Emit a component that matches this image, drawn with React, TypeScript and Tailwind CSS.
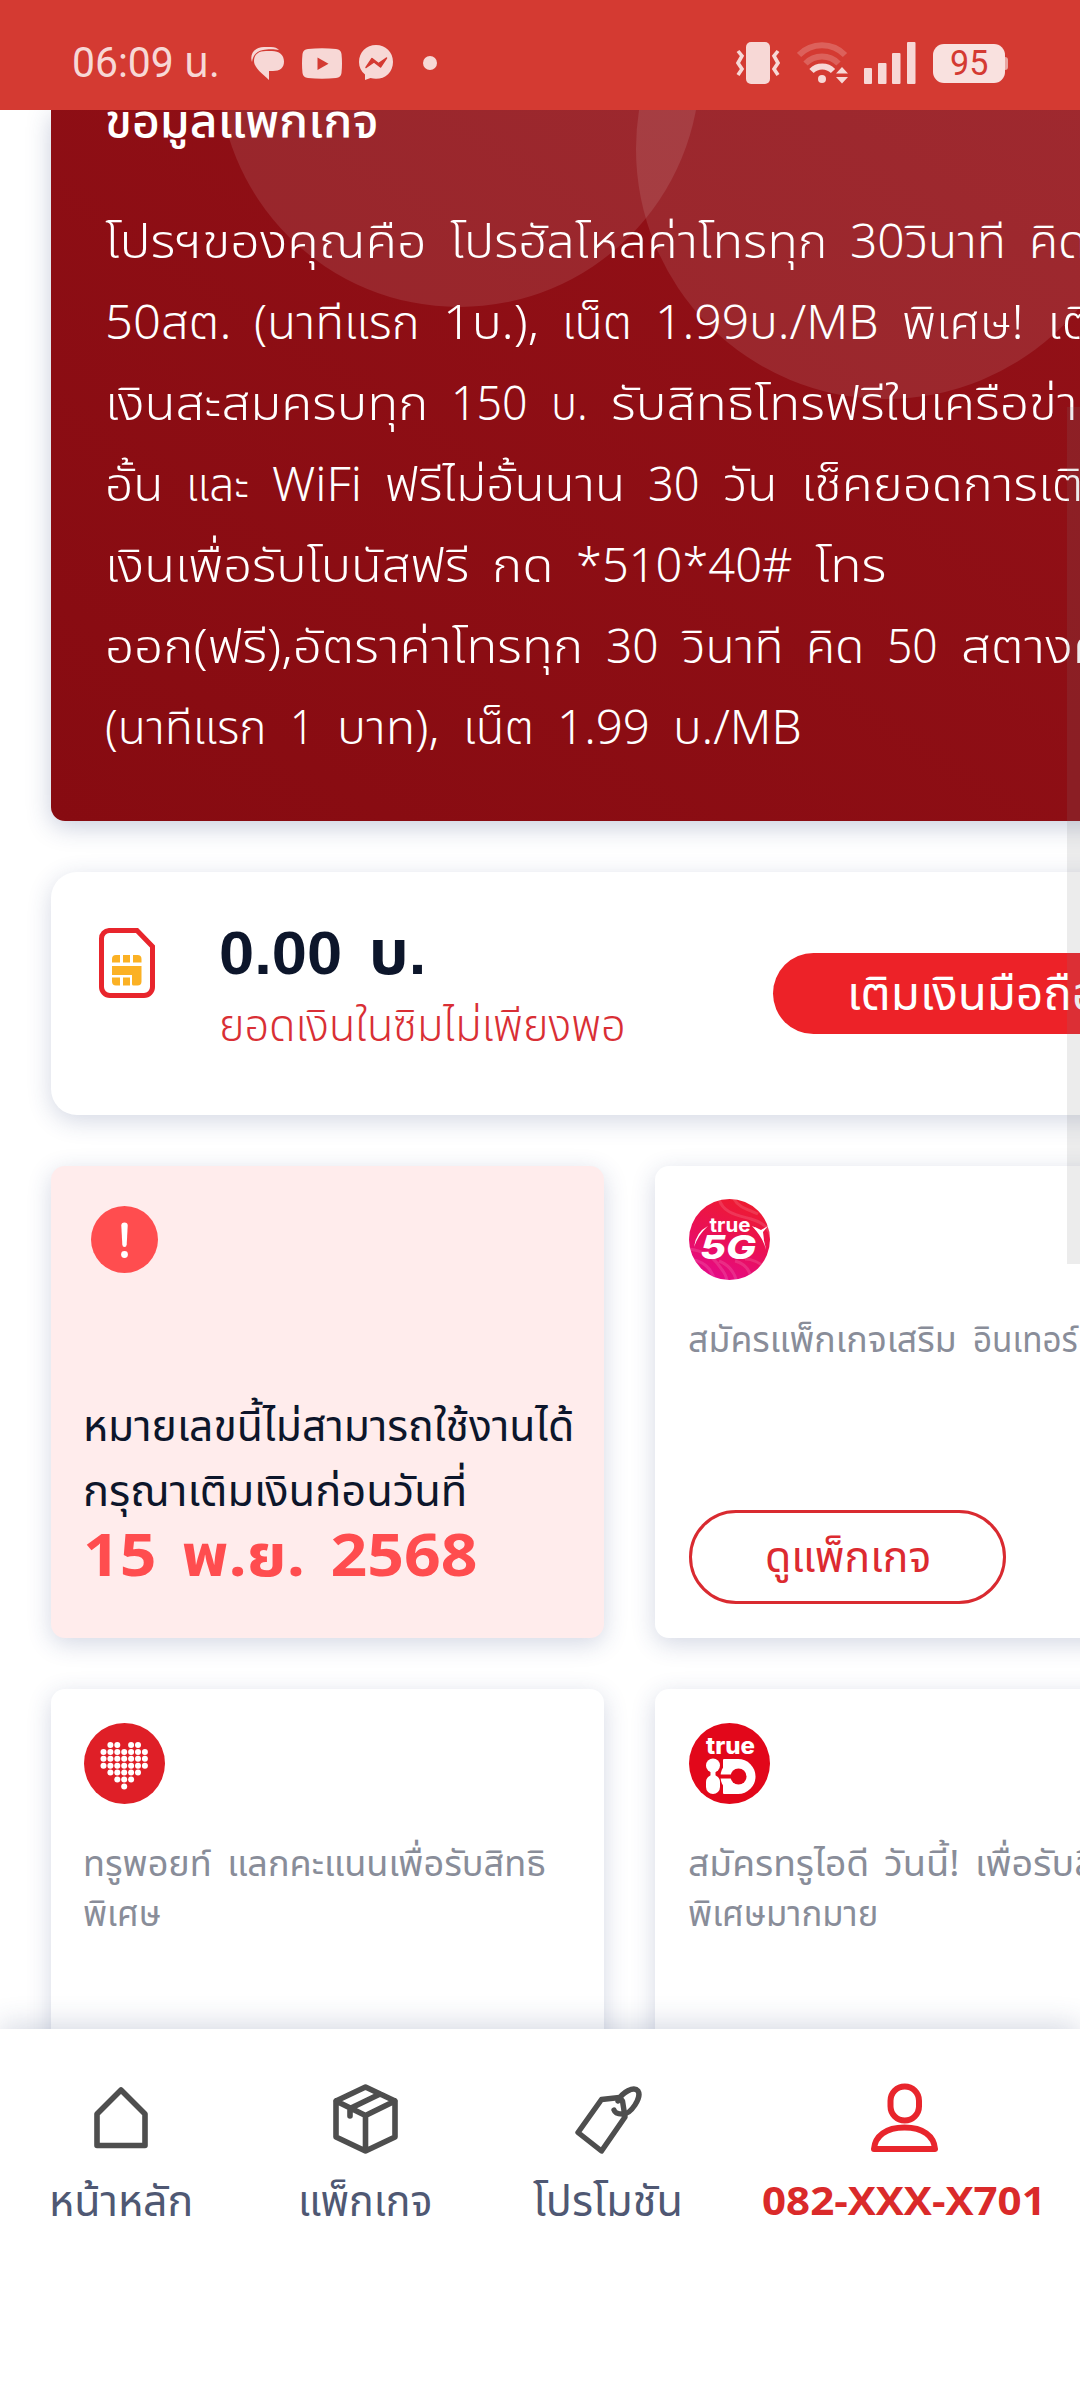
import React, { useLayoutEffect, useRef, useState } from 'react';

const THAI = "font-['Noto_Sans_Thai','Noto_Sans','Noto_Sans_CJK_SC',sans-serif]";

type FitProps = { w: number; className?: string; children: string };

// One line of text stretched to a given width
const Fit: React.FC<FitProps> = ({ w, className = '', children }) => {
  const ref = useRef<HTMLSpanElement>(null);
  const [scale, setScale] = useState(1);

  useLayoutEffect(() => {
    if (ref.current) setScale(w / ref.current.offsetWidth);
  }, [w, children]);

  return (
    <div className={`shrink-0 text-left whitespace-nowrap ${className}`} style={{ width: w }}>
      <span ref={ref} className="inline-block origin-left" style={{ transform: `scaleX(${scale})` }}>
        {children}
      </span>
    </div>
  );
};

const packageLines: [string, number][][] = [
  [['โปรฯของคุณคือ', 322], ['โปรฮัลโหลค่าโทรทุก', 377], ['30วินาที', 156], ['คิด', 58]],
  [['50สต.', 126], ['(นาทีแรก', 166], ['1บ.),', 96], ['เน็ต', 70], ['1.99บ./MB', 224], ['พิเศษ!', 122], ['เติม', 80]],
  [['เงินสะสมครบทุก', 323], ['150', 77], ['บ.', 37], ['รับสิทธิโทรฟรีในเครือข่าย', 497]],
  [['อั้น', 58], ['และ', 63], ['WiFi', 90], ['ฟรีไม่อั้นนาน', 240], ['30', 52], ['วัน', 55], ['เช็คยอดการเติม', 314]],
  [['เงินเพื่อรับโบนัสฟรี', 364], ['กด', 61], ['*510*40#', 216], ['โทร', 72]],
  [['ออก(ฟรี),อัตราค่าโทรทุก', 478], ['30', 53], ['วินาที', 101], ['คิด', 58], ['50', 51], ['สตางค์', 144]],
  [['(นาทีแรก', 162], ['1', 24], ['บาท),', 103], ['เน็ต', 71], ['1.99', 93], ['บ./MB', 129]],
];

const heartRows = [
  [1, 2, 4, 5],
  [0, 1, 2, 3, 4, 5, 6],
  [0, 1, 2, 3, 4, 5, 6],
  [0, 1, 2, 3, 4, 5, 6],
  [1, 2, 3, 4, 5],
  [2, 3, 4],
  [3],
];

const StatusBar = () => (
  <header className="relative z-20 flex h-[110px] shrink-0 items-center bg-[#d43a32] pl-[72px] pr-[72px] pt-[16px] font-[Roboto,'Noto_Sans_Thai',sans-serif] text-[#f7d8d6]">
    <Fit w={148} className="text-[42px] leading-[60px]">06:09 น.</Fit>
    <svg className="ml-[31px]" width="34" height="34" viewBox="0 0 34 34" fill="currentColor">
      <path d="M1 16C-2 7 5 1 13 1h7c4 0 6 1 8 3-4-1-12-1-16 0C6 5 2 9 1 16z" />
      <path d="M15 5h6c7 0 12 4 12 10.500S29 25 22 25h-4v9C12 28 3 22 3 15S8 5 15 5z" />
    </svg>
    <svg className="ml-[17px]" width="40" height="31" viewBox="0 0 40 31">
      <path d="M6 1Q20-.6 34 1q5 .6 5.500 5Q40.500 15.500 39.500 25q-.5 4.500-5.500 5Q20 31.500 6 30 1 29.500.5 25-.5 15.500.5 6 1 1.600 6 1z" fill="currentColor" />
      <path d="M15.500 9.500v12.500l11-6.250z" fill="#d43a32" />
    </svg>
    <svg className="ml-[17px]" width="34" height="36" viewBox="0 0 34 36">
      <path d="M17 0C7.500 0 0 7.300 0 17c0 5.300 2.200 9.400 6 12.600V35l5.500-1.900c1.700.5 3.500.7 5.500.7 9.500 0 17-7 17-16.900S26.500 0 17 0z" fill="currentColor" />
      <path d="M7 22.500l6-9 6.500 5 8-5.500-6 9-6.500-5z" fill="#d43a32" stroke="#d43a32" strokeWidth="1.500" strokeLinejoin="round" />
    </svg>
    <span className="ml-[30px] size-[14px] rounded-full bg-current" />

    <div className="ml-auto flex items-center">
      <svg width="44" height="42" viewBox="0 0 44 42" fill="currentColor">
        <rect x="10" width="24" height="42" rx="5" />
        <path d="M2 9l4 5-4 7 4 6-4 6M42 9l-4 5 4 7-4 6 4 6" fill="none" stroke="currentColor" strokeWidth="3.600" />
      </svg>
      <svg className="ml-[17px]" width="52" height="42" viewBox="0 0 52 42" fill="none">
        <path d="M2 13a32 32 0 0 1 46 0" stroke="#fff" strokeOpacity=".2" strokeWidth="6" />
        <path d="M8.500 21.500a23 23 0 0 1 33 0" stroke="#fff" strokeOpacity=".2" strokeWidth="6" />
        <path d="M14.500 29a15 15 0 0 1 21.500 0" stroke="currentColor" strokeWidth="6" />
        <circle cx="25" cy="37" r="4" fill="currentColor" />
        <path d="M39 31.500l6-6.500 6 6.500zM39 35l6 6.500 6-6.500z" fill="currentColor" />
      </svg>
      <svg className="ml-[15px]" width="52" height="42" viewBox="0 0 52 42" fill="currentColor">
        <rect y="26" width="8" height="16" rx="1" />
        <rect x="14" y="21" width="8.500" height="21" rx="1" />
        <rect x="28" y="11" width="8.500" height="31" rx="1" />
        <rect x="43" width="8.500" height="42" rx="1" />
      </svg>
      <div className="ml-[17px] flex h-[39px] w-[72px] items-center justify-center rounded-[11px] bg-[#f9e1df] text-[35px] text-[#d43a32]">
        <Fit w={38} className="leading-[39px]">95</Fit>
      </div>
      <span className="h-[13px] w-[3px] rounded-r-sm bg-[#e9a5a1]" />
    </div>
  </header>
);

const PackageCard = () => (
  <section className="relative h-[711px] w-[1100px] overflow-hidden rounded-b-[14px] bg-linear-to-tr from-[#870b11] to-[#941118] pl-[54px] text-white">
    <div className="absolute -top-[285px] left-[167px] size-[482px] rounded-full bg-white/10" />
    <div className="absolute -top-[211px] left-[585px] size-[500px] rounded-full bg-white/10" />
    <div className="relative">
      <Fit w={273} className="-mt-[22px] h-[80px] text-[46px] leading-[70px] font-medium">ข้อมูลแพ็กเกจ</Fit>
      <div className="pt-[35px]">
        {packageLines.map((line, i) => (
          <div key={i} className="flex gap-[23px] text-[47px] leading-[81px] font-[350]">
            {line.map(([text, w]) => (
              <Fit key={text} w={w}>{text}</Fit>
            ))}
          </div>
        ))}
      </div>
    </div>
  </section>
);

const SimIcon = () => (
  <svg width="56" height="70" viewBox="0 0 56 70">
    <path d="M10 2.500h28l15.500 16V59a8.500 8.500 0 0 1-8.500 8.500H11A8.500 8.500 0 0 1 2.500 59V10.500a8 8 0 0 1 7.500-8z" fill="#fff" stroke="#e8252c" strokeWidth="5" />
    <g fill="#fbb124">
      <path d="M13 31q0-4 4-4h4v7.500h-8zM24 27h7v7.500h-7zM34 27h4.500q4 0 4 4v3.500H34z" />
      <path d="M13 38h29.500v15.500q0 4-4 4h-4q-1.500 0-1.500-1.500v-9H13z" />
      <path d="M13 49.500h8v8h-4q-4 0-4-4zM24 49.500h7v8h-7z" />
    </g>
  </svg>
);

const BalanceCard = () => (
  <section className="mt-[51px] flex h-[243px] w-[1100px] rounded-[26px] bg-white pl-[48px] shadow-[0_6px_24px_rgba(40,60,120,0.2)]">
    <div className="pt-[56px]">
      <SimIcon />
    </div>
    <div className="pl-[64px] pt-[41px]">
      <Fit w={207} className="font-['Liberation_Sans','Noto_Sans_Thai',sans-serif] text-[62px] leading-[80px] font-bold text-[#0d162b] [word-spacing:9px]">0.00 บ.</Fit>
      <Fit w={407} className="mt-[4px] text-[44px] leading-[62px] font-light text-[#d92f35]">ยอดเงินในซิมไม่เพียงพอ</Fit>
    </div>
    <button className="mt-[81px] ml-[147px] flex h-[81px] w-[360px] shrink-0 items-center rounded-full bg-[#ed2228] pl-[74px] text-white">
      <Fit w={252} className="mt-[4px] text-[47px] leading-[70px]">เติมเงินมือถือ</Fit>
    </button>
  </section>
);

const True5GLogo = () => (
  <svg width="81" height="81" viewBox="0 0 81 81">
    <defs>
      <linearGradient id="pink" x1="0.700" y1="0" x2="0.300" y2="1">
        <stop offset="0" stopColor="#ee1c2e" />
        <stop offset=".5" stopColor="#ea1055" />
        <stop offset="1" stopColor="#e50a8a" />
      </linearGradient>
      <clipPath id="disc"><circle cx="40.500" cy="40.500" r="40.500" /></clipPath>
    </defs>
    <g clipPath="url(#disc)">
      <rect width="81" height="81" fill="url(#pink)" />
      <g fill="none" stroke="#fff" strokeOpacity=".13" strokeWidth="3">
        <path d="M30 0c4 14 18 16 32 20s18 10 20 18M45 0c5 9 14 10 24 15" />
        <path d="M0 50c14 2 22 6 28 14s10 12 10 20M0 60c14 2 22 8 26 22M30 62c10 4 16 12 18 22M46 62c8 2 14 8 16 16M56 60c8 0 14 4 20 8" />
      </g>
    </g>
    <path d="M5 48Q7 33 19 27 9 36 5 48z" fill="#fff" />
    <path d="M63 27q11 3 14 24-2-11-14-24zM66 28l6 3 7-4-5 6 1 8-5-7z" fill="#fff" />
    <text x="41" y="32.500" textAnchor="middle" textLength="41" lengthAdjust="spacingAndGlyphs" fill="#fff" fontFamily="Inter, sans-serif" fontWeight="700" fontSize="20">true</text>
    <text x="11" y="60" textLength="56" lengthAdjust="spacingAndGlyphs" fill="#fff" fontFamily="Inter, sans-serif" fontStyle="italic" fontWeight="800" fontSize="32">5G</text>
  </svg>
);

const HeartLogo = () => (
  <svg width="81" height="81" viewBox="0 0 81 81">
    <circle cx="40.500" cy="40.500" r="40.500" fill="#df1f27" />
    {heartRows.map((row, y) =>
      row.map((x) => <circle key={`${x}-${y}`} cx={19.500 + x * 6.900} cy={22 + y * 6.900} r="3" fill="#fff" />)
    )}
  </svg>
);

const TrueIdLogo = () => (
  <svg width="81" height="81" viewBox="0 0 81 81">
    <circle cx="40.500" cy="40.500" r="40.500" fill="#e2071a" />
    <text x="41.500" y="31" textAnchor="middle" textLength="49" lengthAdjust="spacingAndGlyphs" fill="#fff" fontFamily="Inter, sans-serif" fontWeight="800" fontSize="23">true</text>
    <g fill="#fff">
      <circle cx="24" cy="42.500" r="7" />
      <rect x="21.500" y="46" width="5" height="9" />
      <rect x="17" y="52" width="14" height="19" rx="7" />
      <rect x="34" y="36" width="16" height="35" rx="1" />
      <circle cx="49" cy="53.500" r="17.500" />
    </g>
    <circle cx="49.500" cy="53.500" r="8" fill="#e2071a" />
    <rect x="31" y="51.500" width="14" height="4" fill="#e2071a" />
  </svg>
);

const cardBase = 'h-[472px] shrink-0 rounded-[14px] shadow-[0_6px_24px_rgba(40,60,120,0.2)]';

const Services = () => (
  <section className="mt-[51px] grid grid-cols-[553px_553px] gap-[51px]">
    <div className={`${cardBase} bg-[#ffecec] pt-[33px] pl-[32px]`}>
      <svg className="mt-[7px] ml-[8px]" width="67" height="67" viewBox="0 0 67 67">
        <circle cx="33.500" cy="33.500" r="33.500" fill="#ff4d4f" />
        <path d="M30.300 19.500q0-3 3.200-3t3.200 3l-1 19q-.2 2.500-2.200 2.500t-2.200-2.500z" fill="#fff" />
        <circle cx="33.500" cy="48.500" r="3.400" fill="#fff" />
      </svg>
      <div className="pt-[122px] text-[#0d162b]">
        <Fit w={491} className="text-[43px] leading-[65px]">หมายเลขนี้ไม่สามารถใช้งานได้</Fit>
        <Fit w={384} className="text-[43px] leading-[65px]">กรุณาเติมเงินก่อนวันที่</Fit>
        <Fit w={394} className="-mt-[2px] text-[59px] leading-[70px] font-bold text-[#ff4d4f] [word-spacing:8px]">15 พ.ย. 2568</Fit>
      </div>
    </div>

    <div className={`${cardBase} bg-white pt-[33px] pl-[34px]`}>
      <True5GLogo />
      <div className="mt-[36px] flex h-[194px] gap-[16px] text-[36px] leading-[50px] text-[#898d99]">
        <Fit w={269} className="-ml-px">สมัครแพ็กเกจเสริม</Fit>
        <Fit w={156}>อินเทอร์เน็ต</Fit>
      </div>
      <button className="flex h-[94px] w-[317px] items-center justify-center rounded-full border-[3px] border-[#d92a30] text-[#dc2a30]">
        <Fit w={166} className="mt-[3px] text-[43px] leading-[70px]">ดูแพ็กเกจ</Fit>
      </button>
    </div>

    <div className={`${cardBase} bg-white pt-[34px] pl-[33px]`}>
      <HeartLogo />
      <div className="mt-[36px] -ml-px text-[36px] leading-[50px] text-[#898d99]">
        <Fit w={463} className="[word-spacing:6px]">ทรูพอยท์ แลกคะแนนเพื่อรับสิทธิ</Fit>
        <Fit w={78}>พิเศษ</Fit>
      </div>
    </div>

    <div className={`${cardBase} bg-white pt-[34px] pl-[34px]`}>
      <TrueIdLogo />
      <div className="mt-[36px] -ml-px text-[36px] leading-[50px] text-[#898d99]">
        <div className="flex gap-[15px]">
          <Fit w={181}>สมัครทรูไอดี</Fit>
          <Fit w={76}>วันนี้!</Fit>
          <Fit w={164}>เพื่อรับสิทธิ</Fit>
        </div>
        <Fit w={190}>พิเศษมากมาย</Fit>
      </div>
    </div>
  </section>
);

const HomeIcon = () => (
  <svg width="54" height="71" viewBox="0 0 54 71" fill="none" stroke="#4e4e4e" strokeWidth="5.600" strokeLinejoin="round">
    <path d="M27 7L3 31v31.500h48V31z" />
  </svg>
);

const BoxIcon = () => (
  <svg width="65" height="71" viewBox="0 0 65 71" fill="none" stroke="#4e4e4e" strokeWidth="5.600" strokeLinejoin="round" strokeLinecap="round">
    <path d="M32.500 4L3 18v36l29.500 14 29.500-14v-36zM3 18l29.500 14.500L62 18M32.500 32.500v35.500M47 11L17 25.500v7.500" />
  </svg>
);

const TagIcon = () => (
  <svg width="67" height="71" viewBox="0 0 67 71" fill="none" stroke="#4e4e4e" strokeWidth="5.400" strokeLinejoin="round" strokeLinecap="round">
    <path d="M26.500 16.500L3 49.500l23.500 18.500 23.500-34-2.500-16-3-3.500z" />
    <path d="M43 18C47 9 59 3 63 8c4 6-7 24-16 23-4 0-7-1-8-4" />
  </svg>
);

const UserIcon = () => (
  <svg width="67" height="71" viewBox="0 0 67 71" fill="none" stroke="#e8252c" strokeWidth="6" strokeLinejoin="round">
    <rect x="19.500" y="3.500" width="28.500" height="34" rx="14.250" />
    <path d="M3 66C4 53 15 44.500 33.500 44.500S63 53 64 66z" />
  </svg>
);

const navItems = [
  { label: 'หน้าหลัก', w: 144, icon: <HomeIcon />, cell: 'w-[144px] ml-[49px]', text: 'text-[42px] text-[#4f5873]' },
  { label: 'แพ็กเกจ', w: 134, icon: <BoxIcon />, cell: 'w-[134px] ml-[105px]', text: 'text-[42px] text-[#4f5873]' },
  { label: 'โปรโมชัน', w: 150, icon: <TagIcon />, cell: 'w-[150px] ml-[101px]', text: 'text-[42px] text-[#4f5873]' },
  { label: '082-XXX-X701', w: 284, icon: <UserIcon />, cell: 'w-[284px] ml-[79px]', text: 'text-[40px] font-bold text-[#da2a2a]' },
];

const BottomNav = () => (
  <nav className="relative z-20 flex h-[371px] shrink-0 bg-white pt-[54px] shadow-[0_-4px_28px_rgba(40,60,110,0.2)]">
    {navItems.map((item) => (
      <div key={item.label} className={`flex flex-col items-center ${item.cell}`}>
        {item.icon}
        <Fit w={item.w} className={`mt-[14px] leading-[70px] ${item.text}`}>{item.label}</Fit>
      </div>
    ))}
  </nav>
);

const App: React.FC = () => {
  return (
    <div className={`relative flex h-[2400px] w-[1080px] flex-col overflow-hidden bg-white ${THAI}`}>
      <StatusBar />
      <main className="h-[1919px] shrink-0 overflow-hidden pl-[51px]">
        <div className="w-[1100px] rounded-b-[14px] shadow-[0_6px_24px_rgba(40,60,120,0.25)]">
          <PackageCard />
        </div>
        <BalanceCard />
        <Services />
      </main>
      <BottomNav />
      {/* scroll thumb */}
      <div className="absolute top-[407px] right-0 z-30 h-[857px] w-[13px] bg-[#808080]/15" />
    </div>
  );
};

export default App;
